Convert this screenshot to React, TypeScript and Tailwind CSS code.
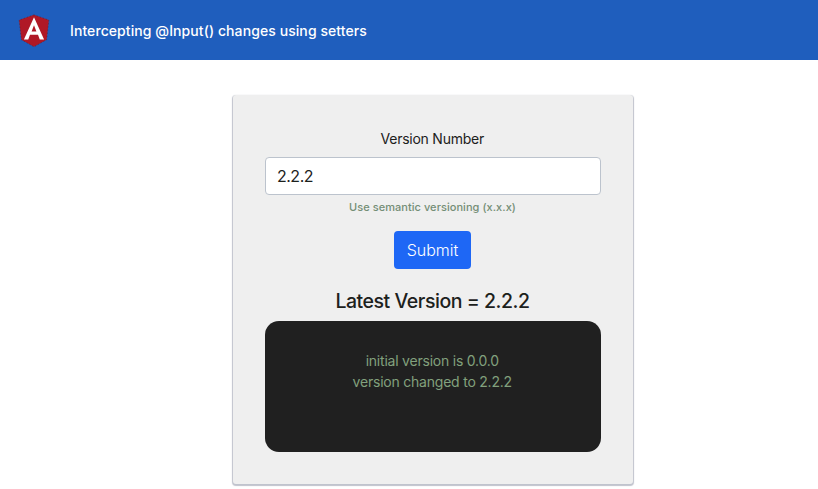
import React from "react";

function AngularLogo() {
  return (
    <svg viewBox="0 0 250 250" className="h-10 w-10 shrink-0" aria-hidden="true">
      <path fill="#b01826" stroke="#36283f" strokeWidth="3" strokeDasharray="8 12" d="M125 30 31.9 63.2l14.2 123.1L125 230l78.9-43.7 14.2-123.1z" />
      <path fill="#fff" d="M125 46 62 184h27l11-30h50l11 30h27zm15 88h-30l15-39z" />
    </svg>
  );
}

const log = ["initial version is 0.0.0", "version changed to 2.2.2"];

export default function App() {
  return (
    <div className="h-[489px] overflow-hidden bg-white font-[Inter,sans-serif] text-[#1c211c]">
      <header className="flex h-[60px] items-center bg-[#1f5ebd] pl-[14px] text-white">
        <AngularLogo />
        <span className="ml-4 whitespace-nowrap text-[14px] font-medium tracking-[0.08px]">Intercepting @Input() changes using setters</span>
      </header>
      <main className="ml-[233px] mt-[35px] flex h-[389px] w-[400px] flex-col items-center rounded-[3px] bg-[#efefef] px-8 pt-[33px] shadow-[0_1px_1px_1px_#c0c3cd]">
        <label className="mr-[1.5px] text-[14px] leading-[21px] tracking-[-0.25px]">Version Number</label>
        <input readOnly value="2.2.2" className="mt-2 h-[38px] w-full rounded-[4px] border border-[#bcc3cd] bg-white px-[11px] text-[16px] tracking-[-0.5px] outline-none" />
        <small className="mr-px mt-1 text-[11px] font-medium leading-[17px] tracking-[0.05px] text-[#748e76]">Use semantic versioning (x.x.x)</small>
        <button className="mr-px mt-[15px] h-[38px] w-[77px] shrink-0 rounded-[4px] bg-[#1e67f5] text-[16px] font-light text-white">Submit</button>
        <h2 className="mr-px mt-5 text-[19.5px] font-medium leading-6 tracking-[-0.46px]">Latest Version = 2.2.2</h2>
        <div className="mt-2 h-[131px] w-full shrink-0 rounded-[14px] bg-[#202020] pr-[1.5px] pt-[29px] text-center text-[14px] leading-[21px] tracking-[-0.22px] text-[#82a17d]">
          {log.map((l) => <p key={l}>{l}</p>)}
        </div>
      </main>
    </div>
  );
}
